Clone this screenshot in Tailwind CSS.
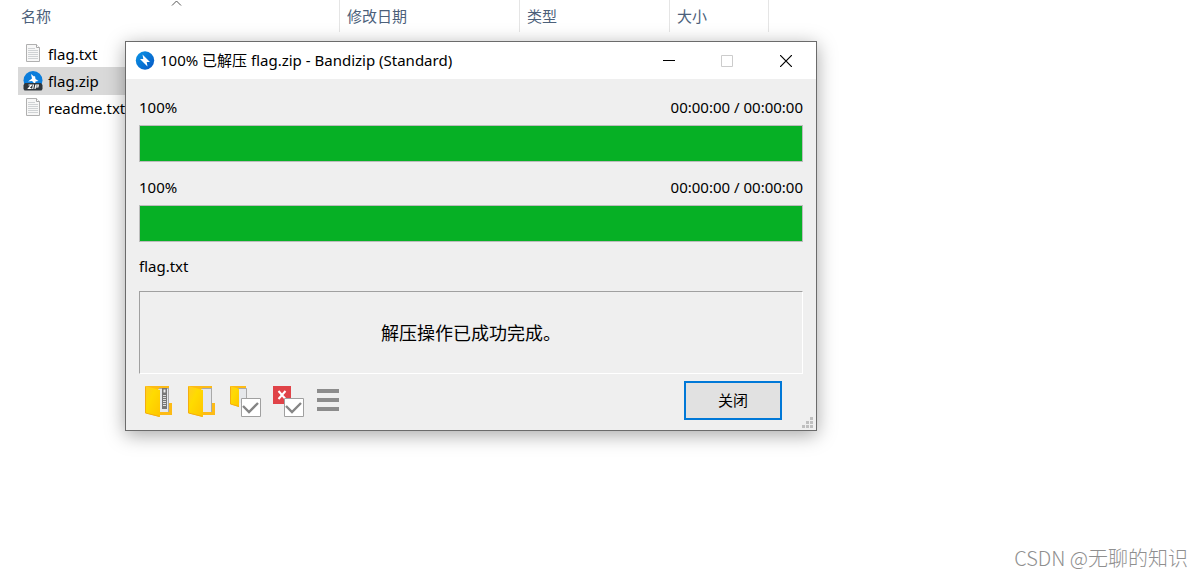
<!DOCTYPE html>
<html lang="zh-CN">
<head>
  <meta charset="UTF-8">
  <meta name="viewport" content="width=device-width, initial-scale=1.0">
  <title>Bandizip</title>
  <script src="https://cdn.jsdelivr.net/npm/@tailwindcss/browser@4"></script>
</head>
<body class="relative min-h-screen overflow-hidden bg-white text-[15px] leading-6 text-black font-['Noto_Sans','Noto_Sans_CJK_SC',sans-serif]">

  <!-- file list -->
  <main>
    <table class="w-[769px] table-fixed border-separate border-spacing-0 text-left">
      <thead>
        <tr class="h-8 text-[#4c607a]">
          <th class="relative w-[340px] border-r border-[#e5e5e5] p-0 pl-[21px] font-normal">
            名称
            <svg class="absolute top-0 left-[171px]" width="11" height="7" viewBox="0 0 11 7" fill="none" stroke="#555"><path d="M1 5.500 5.500 1 10 5.500"/></svg>
          </th>
          <th class="w-[180px] border-r border-[#e5e5e5] p-0 pl-[7px] font-normal">修改日期</th>
          <th class="w-[150px] border-r border-[#e5e5e5] p-0 pl-[7px] font-normal">类型</th>
          <th class="border-r border-[#e5e5e5] p-0 pl-[7px] font-normal">大小</th>
        </tr>
      </thead>
    </table>

    <ul class="mt-2 ml-[18px] w-[752px]">
      <li class="flex h-[27px] items-center gap-[5px] pl-[5px]">
        <svg width="20" height="20" viewBox="0 0 20 20" fill="none"><path d="M3.500.500h10l3 3v14h-13z" fill="#f7f7f7" stroke="#b0b0b0"/><path d="M13.500.500v3h3" fill="#fff" stroke="#a8a8a8"/><path d="M5 4.500h7M5 6.500h10M5 8.500h10M5 10.500h10M5 12.500h10M5 14.500h10" stroke="#cfd2d4"/></svg>
        flag.txt
      </li>
      <li class="flex h-7 items-center gap-[5px] bg-[#d9d9d9] pl-[5px]">
        <svg width="20" height="20" viewBox="0 0 20 20"><circle cx="10" cy="9.500" r="9.500" fill="#0b7ddb"/><path d="m8 3 3 2.500 1-.5.500 3 3 2-3 .5-.5 2.500-3-3-4 .5 4-3z" fill="#fff"/><path d="M2 12h16l1.500 2v4l-1 1.500h-17L.5 18v-4z" fill="#30363b"/><path d="M5.500 14h3l-3 3.500h3M10.500 13.500l-.8 4.500M12 18l.8-4h2.500l-.4 2h-2.500" fill="none" stroke="#fff" stroke-width="1.200"/></svg>
        flag.zip
      </li>
      <li class="flex h-[26px] items-center gap-[5px] pl-[5px]">
        <svg width="20" height="20" viewBox="0 0 20 20" fill="none"><path d="M3.500.500h10l3 3v14h-13z" fill="#f7f7f7" stroke="#b0b0b0"/><path d="M13.500.500v3h3" fill="#fff" stroke="#a8a8a8"/><path d="M5 4.500h7M5 6.500h10M5 8.500h10M5 10.500h10M5 12.500h10M5 14.500h10" stroke="#cfd2d4"/></svg>
        readme.txt
      </li>
    </ul>
  </main>

  <!-- extraction window -->
  <section role="dialog" aria-labelledby="dialog-title" class="absolute top-[41px] left-[125px] w-[692px] border border-[#6b6b6b] bg-[#efefef] shadow-[0_4px_18px_rgba(0,0,0,0.35)]">
    <header class="flex h-[37px] items-center bg-white pl-[9px]">
      <svg class="mr-[5px]" width="20" height="20" viewBox="0 0 20 20"><defs><linearGradient id="blue" x2="1" y2="1"><stop stop-color="#0b96e6"/><stop offset="1" stop-color="#0756c4"/></linearGradient></defs><circle cx="10" cy="9.500" r="9.200" fill="url(#blue)"/><path d="m7.500 3.500.8 4.500H5l7.500 7.500-.8-4.500H15z" fill="#fff"/></svg>
      <h1 id="dialog-title" class="flex-1 pb-[2px]">100% 已解压 flag.zip - Bandizip (Standard)</h1>
      <button aria-label="最小化" class="flex h-full w-[58px] items-center justify-center"><svg width="12" height="12" viewBox="0 0 12 12" stroke="#000"><path d="M0 5.500h12"/></svg></button>
      <button aria-label="最大化" disabled class="flex h-full w-[58px] items-center justify-center"><svg width="12" height="12" viewBox="0 0 12 12" fill="none" stroke="#ccc"><path d="M.5.500h11v11H.5z"/></svg></button>
      <button aria-label="关闭窗口" class="flex h-full w-[60px] items-center justify-center"><svg width="12" height="12" viewBox="0 0 12 12" stroke="#000" stroke-width="1.200"><path d="m0 0 12 12M12 0 0 12"/></svg></button>
    </header>

    <div class="px-[13px] pt-4 pb-[10px]">
      <div class="flex justify-between"><span>100%</span><span>00:00:00 / 00:00:00</span></div>
      <div role="progressbar" aria-label="文件进度" aria-valuenow="100" class="mt-[6px] h-[37px] border border-[#bcbcbc] bg-[#06b025]"></div>

      <div class="mt-[13px] flex justify-between"><span>100%</span><span>00:00:00 / 00:00:00</span></div>
      <div role="progressbar" aria-label="总进度" aria-valuenow="100" class="mt-[6px] h-[37px] border border-[#bcbcbc] bg-[#06b025]"></div>

      <p class="mt-3">flag.txt</p>

      <div class="mt-[13px] flex h-[83px] items-center justify-center border border-t-[#a0a0a0] border-r-white border-b-white border-l-[#a0a0a0] text-lg">解压操作已成功完成。</div>

      <div class="mt-[7px] flex items-center justify-between pr-[21px] pl-[5px]">
        <div class="flex gap-[11px]">
          <button aria-label="打开压缩包">
            <svg width="32" height="34" viewBox="0 0 32 34"><defs><linearGradient id="gold" x2="1" y2="1"><stop stop-color="#ffc928"/><stop offset=".4" stop-color="#ffdb00"/><stop offset="1" stop-color="#ffc400"/></linearGradient></defs><path d="M1 2h24v5H1zM14 28h11V19h3v12H14z" fill="#fdbb16"/><path d="M14 5h11v23H14z" fill="#e6e8eb"/><path d="M15 4.500h10M24.500 4v24" stroke="#a9a9a9"/><path d="M18 4h5v21h-5z" fill="#777"/><path d="M19.500 5.500h2v3h-2z" fill="#eee"/><path d="M20.500 11v12" stroke="#ddd" stroke-width="3" stroke-dasharray="1 1"/><path d="m1 2 15 4v27L1 29z" fill="url(#gold)"/><path d="M1.500 3v26l14 3.500" fill="none" stroke="#f5ad10"/></svg>
          </button>
          <button aria-label="打开文件夹">
            <svg width="32" height="34" viewBox="0 0 32 34"><path d="M1 2h24v5H1zM14 28h11V19h3v12H14z" fill="#fdbb16"/><path d="M14 5h11v23H14z" fill="#e6e8eb"/><path d="M15 4.500h10M24.500 4v24" stroke="#a9a9a9"/><path d="m1 2 15 4v27L1 29z" fill="url(#gold)"/><path d="M1.500 3v26l14 3.500" fill="none" stroke="#f5ad10"/></svg>
          </button>
          <button aria-label="完成后打开文件夹">
            <svg width="32" height="34" viewBox="0 0 32 34" fill="none"><path d="M0 2h16v4H0z" fill="#fdbb16"/><path d="M8 4h9v15H8z" fill="#e6e8eb"/><path d="M8 4.500h8.500V19" stroke="#a9a9a9"/><path d="m0 2 9 3v18l-9-3z" fill="url(#gold)"/><path d="M.5 3v17l8.500 2.500" stroke="#f5ad10"/><path d="M11.500 14.500h19v18h-19z" fill="#fff" stroke="#a0a0a0"/><path d="m13 22 6 6 9-9" stroke="#858585" stroke-width="2.400"/></svg>
          </button>
          <button aria-label="完成后关闭">
            <svg width="32" height="34" viewBox="0 0 32 34" fill="none"><path d="M0 2h18v18H0z" fill="#e04348"/><path d="m5.500 7 7 8M12.500 7l-7 8" stroke="#fff" stroke-width="2"/><path d="M11.500 14.500h19v18h-19z" fill="#fff" stroke="#a0a0a0"/><path d="m13 22 6 6 9-9" stroke="#858585" stroke-width="2.400"/></svg>
          </button>
          <button aria-label="菜单">
            <svg width="24" height="34" viewBox="0 0 24 34" stroke="#8c8c8c" stroke-width="4"><path d="M1 7h22M1 16h22M1 25h22"/></svg>
          </button>
        </div>
        <button class="h-[39px] w-[98px] border-2 border-[#0078d7] bg-[#e1e1e1] pb-px">关闭</button>
      </div>
    </div>

    <svg class="absolute right-[3px] bottom-[2px]" width="11" height="11" viewBox="0 0 11 11" fill="#bfbfbf"><path d="M8 0h3v3H8zM4 4h3v3H4zM8 4h3v3H8zM0 8h3v3H0zM4 8h3v3H4zM8 8h3v3H8z"/></svg>
  </section>

  <footer class="absolute right-[14px] bottom-[5px] text-[20px] leading-7 font-light text-[#8f8f8f] font-['Noto_Sans_CJK_SC',sans-serif]">CSDN @无聊的知识</footer>
</body>
</html>
